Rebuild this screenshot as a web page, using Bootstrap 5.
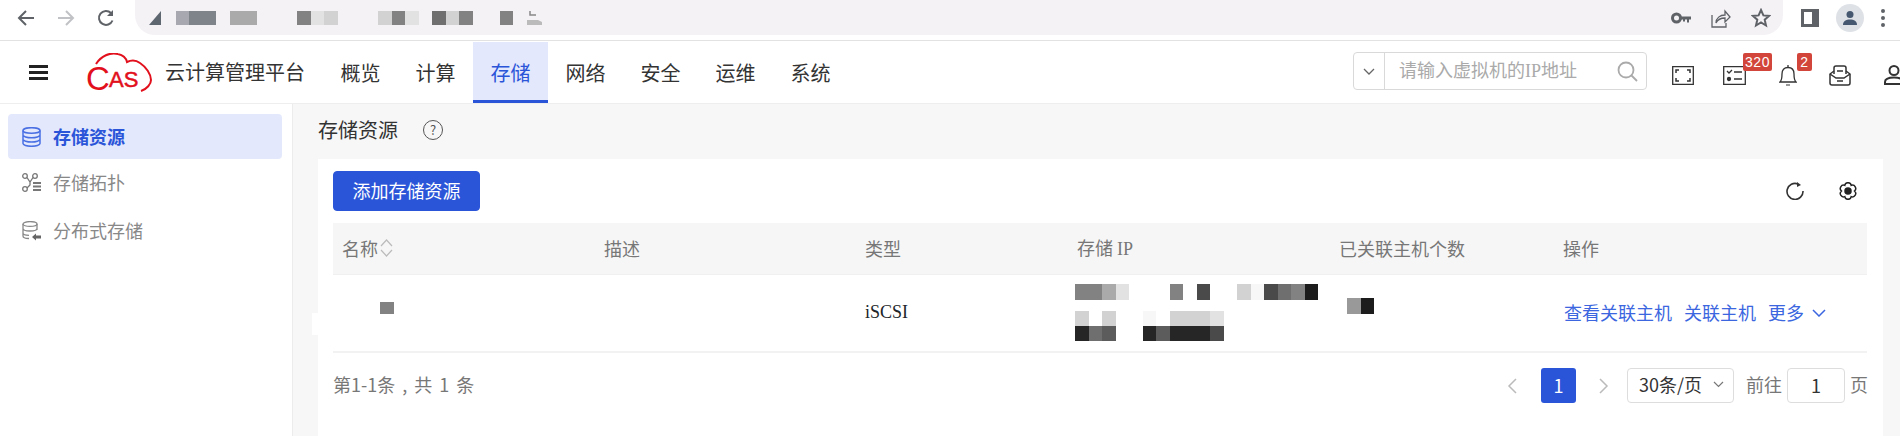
<!DOCTYPE html>
<html lang="zh-CN">
<head>
    <meta charset="UTF-8">
    <meta name="viewport" content="width=device-width, initial-scale=1.0">
    <title>云计算管理平台</title>
    <link href="https://cdn.jsdelivr.net/npm/bootstrap@5.3.0/dist/css/bootstrap.min.css" rel="stylesheet">

    <style>
        html, body {
            height: 436px;
            overflow: hidden;
        }
        body {
            font-family: "Noto Sans CJK SC", "Liberation Sans", sans-serif;
            font-size: 18px;
            color: #333;
            background-color: #fff;
            position: relative;
        }
        svg {
            display: block;
            flex: none;
        }

        /* browser chrome */
        .chrome-bar {
            height: 41px;
            border-bottom: 1px solid #e2e2e2;
        }
        .chrome-btns {
            width: 135px;
            padding-left: 17px;
            gap: 22px;
            height: 35px;
        }
        .addr-pill {
            width: 1648px;
            height: 35px;
            padding-left: 14px;
            background-color: #f5f2f6;
            border-radius: 0 0 20px 20px;
        }
        .addr-tools {
            gap: 20px;
            padding-right: 12px;
        }
        .chrome-right {
            gap: 17px;
            padding-left: 18px;
            height: 35px;
        }
        .avatar-dot {
            width: 28px;
            height: 28px;
            border-radius: 50%;
            background-color: #dee1e6;
        }

        /* mosaic blocks hiding the redacted text */
        .mosaic {
            display: flex;
        }
        .mosaic i {
            display: block;
            flex: none;
            width: 13.5px;
            height: 16px;
        }
        .addr-pill .mosaic i {
            height: 14px;
        }
        .m-0 { background-color: transparent; }
        .m-a { background-color: #262626; }
        .m-b { background-color: #4a4a4a; }
        .m-c { background-color: #5c5c5c; }
        .m-d { background-color: #6f6f6f; }
        .m-e { background-color: #828282; }
        .m-f { background-color: #999; }
        .m-g { background-color: #aaa; }
        .m-h { background-color: #d2d2d2; }
        .m-i { background-color: #e2e2e2; }
        .m-j { background-color: #f7f7f7; }
        .m-k { background-color: #a8a8b0; }
        .m-l { background-color: #7f838a; }
        .m-n { background-color: #1c1c1c; }

        /* top nav */
        .top-nav {
            height: 63px;
            padding: 0;
            align-items: stretch;
            flex-wrap: nowrap;
            border-bottom: 1px solid #eee;
        }
        .menu-bars {
            margin: 0 38px 0 29px;
        }
        .brand-logo {
            margin-top: 8px;
        }
        .brand-name {
            font-size: 20px;
            color: #333;
            margin: 0 18px 0 12px;
        }
        .top-tabs .nav-link {
            width: 75px;
            height: 61px;
            margin-top: 1px;
            padding: 0;
            font-size: 20px;
            line-height: 61px;
            text-align: center;
            color: #333;
            border-bottom: 3px solid transparent;
        }
        .top-tabs .nav-link.active {
            color: #2b55d9;
            background-color: #e3e8fc;
            border-bottom-color: #2b55d9;
        }
        .search-box {
            width: 294px;
            height: 38px;
            margin-top: 11px;
            border: 1px solid #d9d9d9;
            border-radius: 4px;
        }
        .search-drop {
            width: 31px;
            height: 100%;
            border-right: 1px solid #d9d9d9;
        }
        .search-hint {
            font-size: 18px;
            color: #aaa;
            padding-left: 14px;
            font-family: "Liberation Serif", "Noto Sans CJK SC", sans-serif;
        }
        .nav-tools {
            position: relative;
            width: 253px;
            flex: none;
        }
        .nav-tools svg {
            position: absolute;
            top: 25px;
        }
        .nav-tools svg.tall-icon {
            top: 24px;
        }
        .num-tag {
            position: absolute;
            top: 12px;
            height: 18px;
            font-family: "Liberation Sans", sans-serif;
            font-size: 14px;
            line-height: 18px;
            text-align: center;
            color: #fff;
            background-color: #d2453a;
            border-radius: 2px;
            letter-spacing: .5px;
        }

        /* side menu */
        .main-wrap {
            height: 332px;
        }
        .side-menu {
            width: 293px;
            flex: none;
            padding: 10px 10px 0 8px;
            border-right: 1px solid #ececec;
        }
        .side-menu a {
            height: 45px;
            margin-bottom: 3px;
            padding-left: 14px;
            gap: 12px;
            font-size: 18px;
            color: #888;
            border-radius: 4px;
            text-decoration: none;
        }
        .side-menu a.active {
            margin-bottom: 1px;
            color: #2b55d9;
            font-weight: 700;
            background-color: #e3e8fc;
        }

        /* content */
        .content-area {
            background-color: #f7f7f7;
            padding: 0 17px 0 25px;
            min-width: 0;
        }
        .page-head {
            height: 55px;
            padding-bottom: 3px;
            gap: 25px;
            font-size: 20px;
            color: #333;
        }
        .help-mark {
            width: 20px;
            height: 20px;
            border: 1px solid #555;
            border-radius: 50%;
            font-size: 13px;
            line-height: 18px;
            text-align: center;
            color: #555;
        }
        .panel-box {
            height: 277px;
            padding: 12px 16px 0 15px;
            border-radius: 0;
        }
        .btn-add {
            width: 147px;
            height: 40px;
            padding: 0 0 2px;
            font-size: 18px;
            background-color: #2b55d9;
            border-color: #2b55d9;
            border-radius: 4px;
        }
        .panel-tools {
            gap: 35px;
            padding-right: 10px;
        }
        .res-table {
            table-layout: fixed;
            margin: 12px 0 0;
            font-size: 18px;
        }
        .res-table th {
            height: 51px;
            padding: 0 9px;
            font-weight: 400;
            color: #777;
            background-color: #f6f6f6;
            border-bottom: 1px solid #f0f0f0;
            vertical-align: middle;
            white-space: nowrap;
        }
        .res-table td {
            height: 78px;
            padding: 0 9px;
            border-bottom: 2px solid #f2f2f2;
            vertical-align: middle;
        }
        .col-name { width: 262px; }
        .col-desc { width: 261px; }
        .col-kind { width: 212px; }
        .col-ip { width: 262px; }
        .col-count { width: 224px; }
        .serif-run {
            font-family: "Liberation Serif", "Noto Sans CJK SC", serif;
        }
        .sort-mark {
            margin-left: -2px;
        }
        .name-marks {
            margin-bottom: 10px;
        }
        .name-marks i {
            height: 12px;
        }
        .count-marks {
            margin-bottom: 13px;
        }
        .ip-marks .mosaic {
            margin-left: -2px;
        }
        .ip-marks .mosaic + .mosaic i {
            height: 15px;
        }
        .ip-first {
            margin-bottom: 11px;
        }
        .row-links {
            gap: 12px;
            margin-left: 1px;
            color: #3b66e0;
            white-space: nowrap;
        }
        .row-links a {
            color: #3b66e0;
            text-decoration: none;
        }

        /* footer of the table */
        .table-foot {
            height: 65px;
            color: #777;
        }
        .foot-count {
            padding-bottom: 3px;
            word-spacing: 3px;
        }
        .pager-prev {
            margin-right: 24px;
        }
        .pager-next {
            margin: 0 18px 0 23px;
        }
        .pager-btn {
            width: 35px;
            height: 35px;
            line-height: 35px;
            text-align: center;
            color: #fff;
            background-color: #2b55d9;
            border-radius: 3px;
        }
        .size-select {
            width: 107px;
            height: 35px;
            padding: 0 9px 2px 11px;
            color: #333;
            border: 1px solid #ddd;
            border-radius: 4px;
        }
        .jump-label {
            margin: 0 5px 0 12px;
            padding-bottom: 2px;
        }
        .jump-input {
            width: 58px;
            height: 35px;
            margin-right: 5px;
            line-height: 33px;
            text-align: center;
            color: #333;
            border: 1px solid #ddd;
            border-radius: 4px;
        }
        .jump-end {
            margin-right: -1px;
            padding-bottom: 2px;
        }
        .gutter-notch {
            position: absolute;
            left: 312px;
            top: 313px;
            width: 6px;
            height: 22px;
            background-color: #fff;
        }
    </style>
</head>
<body>

<div class="chrome-bar d-flex align-items-start">
    <div class="chrome-btns d-flex align-items-center">
        <svg width="18" height="18" viewBox="0 0 18 18" fill="none" stroke="#5f6368" stroke-width="2"><path d="M17 9H2M9 2 2 9l7 7"/></svg>
        <svg width="18" height="18" viewBox="0 0 18 18" fill="none" stroke="#c0c2c5" stroke-width="2"><path d="M1 9h15M9 2l7 7-7 7"/></svg>
        <svg width="18" height="18" viewBox="0 0 18 18" fill="none" stroke="#5f6368" stroke-width="2"><path d="M15.500 11.500A7 7 0 1 1 14 4"/><path d="M16 1v6h-6" fill="#5f6368" stroke="none"/></svg>
    </div>
    <div class="addr-pill d-flex align-items-center justify-content-between">
        <div class="mosaic align-items-center">
            <svg width="12" height="14" viewBox="0 0 12 14"><path d="M12 0v14H0z" fill="#5e6670"/></svg>
            <i class="m-0" style="width:14.500px"></i>
            <i class="m-k"></i><i class="m-l"></i><i class="m-l"></i><i class="m-0"></i>
            <i class="m-g"></i><i class="m-g"></i>
            <i class="m-0"></i><i class="m-0"></i><i class="m-0"></i>
            <i class="m-e"></i><i class="m-i"></i><i class="m-h"></i>
            <i class="m-0"></i><i class="m-0"></i><i class="m-0"></i>
            <i class="m-h"></i><i class="m-e"></i><i class="m-i"></i><i class="m-0"></i>
            <i class="m-d"></i><i class="m-h"></i><i class="m-e"></i>
            <i class="m-0"></i><i class="m-0"></i>
            <i class="m-e"></i><i class="m-0"></i>
            <svg width="15" height="14" viewBox="0 0 15 14"><path d="M3 0v4h6" fill="none" stroke="#888" stroke-width="1.500"/><path d="M0 9h11l4 2v3H0z" fill="#bbb"/></svg>
        </div>
        <div class="addr-tools d-flex align-items-center">
            <svg width="20" height="12" viewBox="0 0 20 12"><circle cx="5.500" cy="6" r="4" fill="none" stroke="#5f6368" stroke-width="3"/><path d="M9 4.500h11v3h-2v3h-2v-3h-2v2h-2v-2H9z" fill="#5f6368"/></svg>
            <svg width="20" height="20" viewBox="0 0 20 20" fill="none" stroke="#5f6368" stroke-width="1.300"><path d="M1 7v12h14v-4"/><path d="M5 15c0-5 4-8 9-8V3l5 6-5 5v-4c-4 0-7 1-9 5z"/></svg>
            <svg width="20" height="20" viewBox="0 0 20 20" fill="none" stroke="#5f6368" stroke-width="2"><path d="m10 2 2.400 5.400 5.600.5-4.300 3.800 1.300 5.800L10 14.500l-5 3 1.300-5.800L2 7.900l5.600-.5z"/></svg>
        </div>
    </div>
    <div class="chrome-right d-flex align-items-center">
        <svg width="18" height="18" viewBox="0 0 18 18"><path d="M0 0h18v18H0zM11 3H3v12h8z" fill="#5f6368" fill-rule="evenodd"/></svg>
        <span class="avatar-dot d-flex align-items-center justify-content-center">
            <svg width="16" height="16" viewBox="0 0 16 16" fill="#46586f"><circle cx="8" cy="4.500" r="3.500"/><path d="M1 15c0-4 3-5.500 7-5.500s7 1.500 7 5.500z"/></svg>
        </span>
        <svg width="4" height="18" viewBox="0 0 4 18" fill="#5f6368"><circle cx="2" cy="2" r="2"/><circle cx="2" cy="9" r="2"/><circle cx="2" cy="16" r="2"/></svg>
    </div>
</div>

<nav class="navbar top-nav bg-white">
    <div class="d-flex align-items-center">
        <svg class="menu-bars" width="19" height="15" viewBox="0 0 19 15" fill="#222"><path d="M0 0h19v3H0zM0 6h19v3H0zM0 12h19v3H0z"/></svg>
        <svg class="brand-logo" width="67" height="47" viewBox="0 0 67 47" fill="none">
            <path d="M10 11C15 3 24-1 32 1c5 1 8 4 9 8 4-2 9-2 13 1 6 4 11 11 11 17 0 4-4 9-10 11" stroke="#e2101c" stroke-width="2"/>
            <text x="0" y="37" font-family="'Liberation Sans', sans-serif" font-size="33" fill="#e2101c">C</text>
            <text x="23" y="34" font-family="'Liberation Sans', sans-serif" font-size="22" fill="#e2101c" stroke="#e2101c" stroke-width=".5">AS</text>
        </svg>
        <span class="brand-name">云计算管理平台</span>
    </div>
    <ul class="nav top-tabs flex-nowrap me-auto">
        <li class="nav-item"><a class="nav-link" href="#">概览</a></li>
        <li class="nav-item"><a class="nav-link" href="#">计算</a></li>
        <li class="nav-item"><a class="nav-link active" href="#">存储</a></li>
        <li class="nav-item"><a class="nav-link" href="#">网络</a></li>
        <li class="nav-item"><a class="nav-link" href="#">安全</a></li>
        <li class="nav-item"><a class="nav-link" href="#">运维</a></li>
        <li class="nav-item"><a class="nav-link" href="#">系统</a></li>
    </ul>
    <div class="search-box d-flex align-items-center">
        <div class="search-drop d-flex align-items-center justify-content-center">
            <svg width="12" height="7" viewBox="0 0 12 7" fill="none" stroke="#666" stroke-width="1.300"><path d="m1 1 5 5 5-5"/></svg>
        </div>
        <span class="search-hint flex-grow-1">请输入虚拟机的IP地址</span>
        <svg class="me-2" width="21" height="21" viewBox="0 0 21 21" fill="none" stroke="#aaa" stroke-width="1.800"><circle cx="9" cy="9" r="7.500"/><path d="m14 14 6 6"/></svg>
    </div>
    <div class="nav-tools">
        <svg style="left:25px" width="22" height="19" viewBox="0 0 22 19" fill="none" stroke="#333" stroke-width="1.300"><path d="M.7.7h20.600v17.600H.7z"/><path d="M4 7V4h3M15 4h3v3M4 12v3h3M15 15h3v-3" stroke-width="1.500"/></svg>
        <svg style="left:76px" width="23" height="19" viewBox="0 0 23 19" fill="none" stroke="#333" stroke-width="1.300"><path d="M.7.7h21.600v17.600H.7z"/><path d="m4 5 2 2 3-3M11 6h8M11 13h8"/><circle cx="6" cy="13" r="1.500" fill="#333"/></svg>
        <span class="num-tag" style="left:96px;width:29px">320</span>
        <svg class="tall-icon" style="left:132px" width="18" height="21" viewBox="0 0 18 21" fill="none" stroke="#333" stroke-width="1.300"><path d="M1 17c2-2 2-4 2-8 0-4 2-6.500 6-6.500s6 2.500 6 6.500c0 4 0 6 2 8z"/><path d="M9 0v2.500"/><path d="M7 20h4" stroke="#999" stroke-width="2"/></svg>
        <span class="num-tag" style="left:150px;width:15px">2</span>
        <svg class="tall-icon" style="left:182px" width="22" height="21" viewBox="0 0 22 21" fill="none" stroke="#333" stroke-width="1.500"><path d="M5 6 1 9v9q0 2 2 2h16q2 0 2-2V9l-4-3"/><path d="m1 9 6 4h8l6-4"/><path d="M5 9V3q0-2 2-2h8q2 0 2 2v6M8 6h6M8 16h6"/></svg>
        <svg class="tall-icon" style="left:237px" width="20" height="20" viewBox="0 0 20 20" fill="none" stroke="#333" stroke-width="2"><circle cx="10" cy="5.500" r="4.500"/><path d="M1 19v-2c0-3 3-4.500 9-4.500s9 1.500 9 4.500v2z"/></svg>
    </div>
</nav>

<div class="main-wrap d-flex">
    <div class="side-menu d-flex flex-column">
        <a class="active d-flex align-items-center" href="#">
            <svg width="19" height="20" viewBox="0 0 19 20" fill="none" stroke="#4a6fe3" stroke-width="1.500"><ellipse cx="9.500" cy="3.500" rx="8.500" ry="2.800"/><path d="M1 3.500v13c0 1.500 4 2.800 8.500 2.800s8.500-1.300 8.500-2.800v-13M1 8c0 1.500 4 2.800 8.500 2.800S18 9.500 18 8M1 12.300c0 1.500 4 2.800 8.500 2.800s8.500-1.300 8.500-2.800"/></svg>
            <span>存储资源</span>
        </a>
        <a class="d-flex align-items-center" href="#">
            <svg width="19" height="20" viewBox="0 0 19 20" fill="none" stroke="#777" stroke-width="1.300"><circle cx="3" cy="3" r="2.300"/><circle cx="13" cy="3" r="2.300"/><circle cx="3" cy="16" r="2.300"/><path d="M5 4.500 8 9l3-4.500M8 9v3l-3 3"/><path d="M11 10h8M11 13.500h8M11 17h8" stroke-width="2"/></svg>
            <span>存储拓扑</span>
        </a>
        <a class="d-flex align-items-center" href="#">
            <svg width="19" height="20" viewBox="0 0 19 20" fill="none" stroke="#888" stroke-width="1.300"><ellipse cx="8" cy="3" rx="7" ry="2.400"/><path d="M1 3v12c0 1.500 3 2.500 6 2.500M15 3v6M1 7.500C1 9 4 10 8 10s7-1 7-2.500M1 12c0 1.300 2.500 2.300 6 2.400"/><path d="M10 16l4-3.500v2h5v3h-5v2z" fill="#666" stroke="none"/></svg>
            <span>分布式存储</span>
        </a>
    </div>

    <main class="content-area flex-grow-1">
        <div class="page-head d-flex align-items-center">
            <span>存储资源</span>
            <span class="help-mark">?</span>
        </div>
        <div class="panel-box card border-0">
            <div class="d-flex justify-content-between align-items-center">
                <button class="btn btn-primary btn-add" type="button">添加存储资源</button>
                <div class="panel-tools d-flex align-items-center">
                    <svg width="18" height="18" viewBox="0 0 18 18" fill="none" stroke="#333" stroke-width="1.600"><path d="M12 2A8 8 0 1 0 17 9"/><path d="M11 0v5l4-2z" fill="#333" stroke="none"/></svg>
                    <svg width="18" height="18" viewBox="0 0 18 18" fill="none" stroke="#222" stroke-width="1.500"><path d="M15.500 9A3.300 3.300 0 0 1 12.250 14.630 3.300 3.300 0 0 1 5.750 14.630 3.300 3.300 0 0 1 2.500 9 3.300 3.300 0 0 1 5.750 3.370 3.300 3.300 0 0 1 12.250 3.370 3.300 3.300 0 0 1 15.500 9z"/><circle cx="9" cy="9" r="3" fill="#222"/></svg>
                </div>
            </div>
            <table class="table res-table">
                <colgroup>
                    <col class="col-name"><col class="col-desc"><col class="col-kind"><col class="col-ip"><col class="col-count"><col>
                </colgroup>
                <thead>
                    <tr>
                        <th>
                            <span class="d-inline-flex align-items-center gap-1">名称
                                <svg class="sort-mark" width="13" height="18" viewBox="0 0 13 18" fill="none" stroke="#bbb" stroke-width="1.200"><path d="m1 7 5.500-6L12 7M1 11l5.500 6 5.500-6"/></svg>
                            </span>
                        </th>
                        <th>描述</th>
                        <th>类型</th>
                        <th>存储 <span class="serif-run">IP</span></th>
                        <th>已关联主机个数</th>
                        <th>操作</th>
                    </tr>
                </thead>
                <tbody>
                    <tr>
                        <td>
                            <div class="mosaic name-marks"><i class="m-0" style="width:38px"></i><i class="m-e"></i></div>
                        </td>
                        <td></td>
                        <td class="serif-run">iSCSI</td>
                        <td class="ip-marks">
                            <div class="mosaic ip-first">
                                <i class="m-e"></i><i class="m-e"></i><i class="m-g"></i><i class="m-i"></i><i class="m-0"></i><i class="m-0"></i><i class="m-0"></i>
                                <i class="m-e"></i><i class="m-0"></i><i class="m-b"></i><i class="m-0"></i><i class="m-0"></i>
                                <i class="m-h"></i><i class="m-j"></i><i class="m-b"></i><i class="m-d"></i><i class="m-e"></i><i class="m-n"></i>
                            </div>
                            <div class="mosaic">
                                <i class="m-h"></i><i class="m-0"></i><i class="m-h"></i><i class="m-0"></i><i class="m-0"></i><i class="m-j"></i><i class="m-0"></i>
                                <i class="m-h"></i><i class="m-h"></i><i class="m-h"></i><i class="m-i"></i>
                            </div>
                            <div class="mosaic">
                                <i class="m-a"></i><i class="m-d"></i><i class="m-c"></i><i class="m-0"></i><i class="m-0"></i><i class="m-a"></i><i class="m-c"></i>
                                <i class="m-a"></i><i class="m-a"></i><i class="m-a"></i><i class="m-b"></i>
                            </div>
                        </td>
                        <td>
                            <div class="mosaic count-marks"><i class="m-0" style="width:8px"></i><i class="m-f"></i><i class="m-n"></i></div>
                        </td>
                        <td>
                            <div class="row-links d-flex align-items-center">
                                <a href="#">查看关联主机</a>
                                <a href="#">关联主机</a>
                                <a href="#" class="d-flex align-items-center gap-2">更多
                                    <svg width="14" height="8" viewBox="0 0 14 8" fill="none" stroke="#3b66e0" stroke-width="1.500"><path d="m1 1 6 6 6-6"/></svg>
                                </a>
                            </div>
                        </td>
                    </tr>
                </tbody>
            </table>
            <div class="table-foot d-flex align-items-center justify-content-between">
                <span class="foot-count">第1-1条 , 共 1 条</span>
                <div class="d-flex align-items-center">
                    <svg class="pager-prev" width="10" height="16" viewBox="0 0 10 16" fill="none" stroke="#bbb" stroke-width="1.500"><path d="M9 1 2 8l7 7"/></svg>
                    <span class="pager-btn">1</span>
                    <svg class="pager-next" width="10" height="16" viewBox="0 0 10 16" fill="none" stroke="#bbb" stroke-width="1.500"><path d="m1 1 7 7-7 7"/></svg>
                    <span class="size-select d-flex align-items-center justify-content-between">30条/页
                        <svg width="11" height="7" viewBox="0 0 11 7" fill="none" stroke="#777" stroke-width="1.200"><path d="m1 1 4.500 4.500L10 1"/></svg>
                    </span>
                    <span class="jump-label">前往</span>
                    <span class="jump-input">1</span>
                    <span class="jump-end">页</span>
                </div>
            </div>
        </div>
    </main>
</div>
<div class="gutter-notch"></div>

<script src="https://cdn.jsdelivr.net/npm/bootstrap@5.3.0/dist/js/bootstrap.bundle.min.js"></script>
</body>
</html>
